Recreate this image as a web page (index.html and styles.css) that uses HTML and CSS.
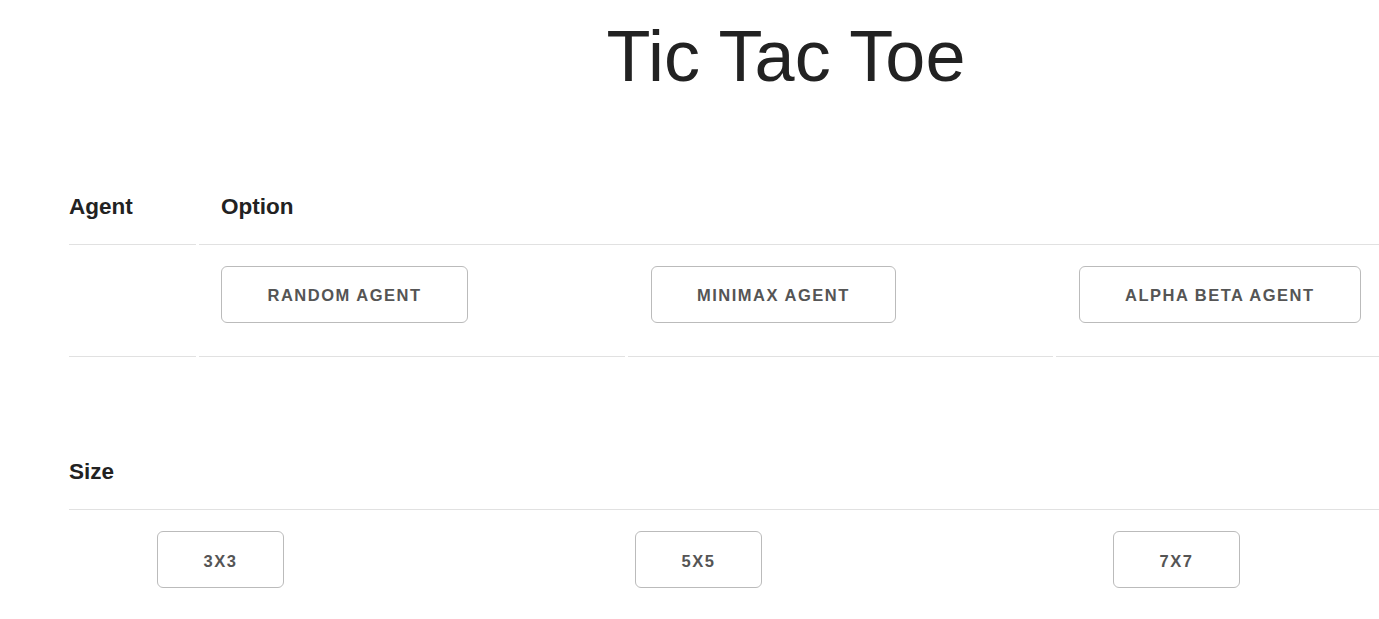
FILE: index.html
```html
<!DOCTYPE html>
<html lang="en">
<head>
<meta charset="utf-8">
<title>Tic Tac Toe</title>
<link rel="stylesheet" href="styles.css">
</head>
<body>
  <h1 class="title">Tic Tac Toe</h1>

  <table class="grid-table agent-table">
    <colgroup>
      <col class="c1"><col class="c2"><col class="c3"><col class="c4">
    </colgroup>
    <thead>
      <tr>
        <th>Agent</th>
        <th colspan="3">Option</th>
      </tr>
    </thead>
    <tbody>
      <tr>
        <td></td>
        <td><button class="btn">RANDOM AGENT</button></td>
        <td><button class="btn">MINIMAX AGENT</button></td>
        <td><button class="btn">ALPHA BETA AGENT</button></td>
      </tr>
    </tbody>
  </table>

  <table class="grid-table size-table">
    <thead>
      <tr><th>Size</th></tr>
    </thead>
    <tbody>
      <tr>
        <td>
          <div class="size-row">
            <button class="btn">3X3</button>
            <button class="btn">5X5</button>
            <button class="btn">7X7</button>
          </div>
        </td>
      </tr>
    </tbody>
  </table>
</body>
</html>
```

FILE: styles.css
```css
html, body {
  margin: 0;
  padding: 0;
  background: #fff;
  overflow: hidden;
}

body {
  width: 1379px;
  height: 619px;
  font-family: "Liberation Sans", Arial, Helvetica, sans-serif;
  font-size: 22.5px;
  line-height: 1.6;
  color: #222;
}

.title {
  margin: 13px 0 0 0;
  padding-left: 193px;
  text-align: center;
  font-size: 72px;
  line-height: 86px;
  font-weight: 400;
  letter-spacing: 0;
  color: #222;
}

.grid-table {
  border-collapse: separate;
  border-spacing: 3px;
  table-layout: fixed;
  margin-left: 66px;
  width: 1317px;
}

.agent-table {
  margin-top: 70px;
}

.size-table {
  margin-top: 74px;
}

.c1 { width: 126.5px; }
.c2 { width: 426.5px; }
.c3 { width: 425px; }
.c4 { width: 324px; }

.grid-table th,
.grid-table td {
  padding: 18px 22.5px;
  text-align: left;
  border-bottom: 1px solid #e1e1e1;
  vertical-align: top;
}

.grid-table th {
  font-weight: 700;
  line-height: 36px;
  padding-top: 17px;
  padding-bottom: 19px;
}

.grid-table th:first-child,
.grid-table td:first-child {
  padding-left: 0;
}

.grid-table th:last-child,
.grid-table td:last-child {
  padding-right: 0;
}

.btn {
  display: inline-flex;
  align-items: center;
  justify-content: center;
  box-sizing: border-box;
  height: 57px;
  padding: 2px 45.5px 0;
  margin: 0 0 15px 0;
  background: transparent;
  border: 1px solid #bbb;
  border-radius: 6px;
  color: #555;
  font-family: "Liberation Sans", Arial, Helvetica, sans-serif;
  font-size: 16.5px;
  font-weight: 700;
  letter-spacing: 1.5px;
  white-space: nowrap;
  text-transform: uppercase;
  cursor: pointer;
}

.size-row {
  display: grid;
  grid-template-columns: 478px 478px auto;
  justify-items: start;
  padding-left: 88px;
}

.size-row .btn {
  width: 127px;
  padding: 3px 0 0;
}
```
